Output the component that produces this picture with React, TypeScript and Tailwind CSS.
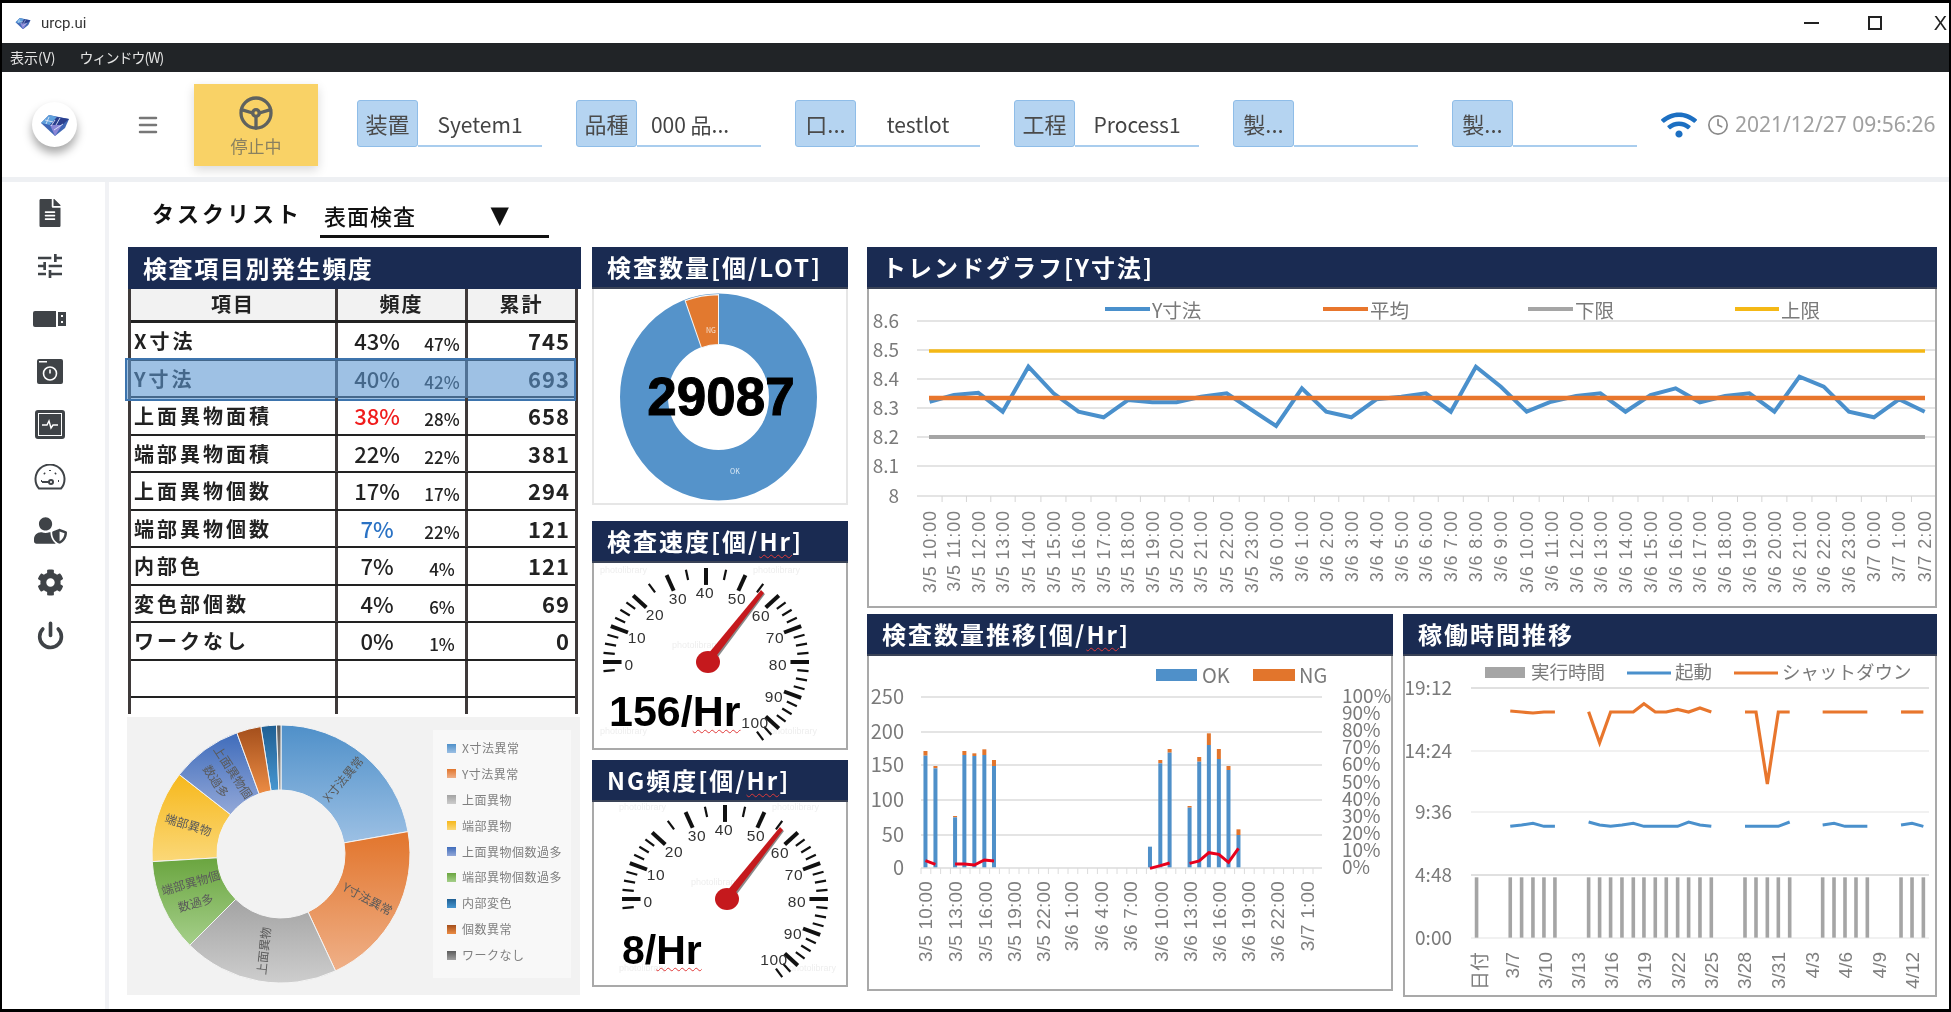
import { FaCog, FaFileAlt, FaUserShield, FaWifi } from 'react-icons/fa'
import { MdTune } from 'react-icons/md'
import { TbSteeringWheel } from 'react-icons/tb'
import { Clock, Menu, Power } from 'lucide-react'
import type { ReactNode } from 'react'

const fields = [
  { label: '装置', value: 'Syetem1' },
  { label: '品種', value: '000 品...', shift: true },
  { label: '口...', value: 'testlot' },
  { label: '工程', value: 'Process1' },
  { label: '製...', value: '' },
  { label: '製...', value: '' },
]

const rows = [
  { name: 'X寸法', a: '43%', b: '47%', total: '745' },
  { name: 'Y寸法', a: '40%', b: '42%', total: '693', selected: true },
  { name: '上面異物面積', a: '38%', b: '28%', total: '658', tone: 'text-[#f01c1c]' },
  { name: '端部異物面積', a: '22%', b: '22%', total: '381' },
  { name: '上面異物個数', a: '17%', b: '17%', total: '294' },
  { name: '端部異物個数', a: '7%', b: '22%', total: '121', tone: 'text-[#2a72c4]' },
  { name: '内部色', a: '7%', b: '4%', total: '121' },
  { name: '変色部個数', a: '4%', b: '6%', total: '69' },
  { name: 'ワークなし', a: '0%', b: '1%', total: '0' },
  { name: '', a: '', b: '', total: '' },
]

const slices = [
  { name: 'X寸法異常', from: 0, to: 80, top: '#4f90c9', bottom: '#9cc0e4' },
  { name: 'Y寸法異常', from: 80, to: 155, top: '#e2752c', bottom: '#efb088' },
  { name: '上面異物', from: 155, to: 225, top: '#a3a3a3', bottom: '#cdcdcd' },
  { name: '端部異物', from: 266.6, to: 308, top: '#f6b81c', bottom: '#fbd878' },
  { name: '上面異物個数過多', from: 308, to: 340, top: '#3f6cbb', bottom: '#93a8d8' },
  { name: '端部異物個数過多', from: 225, to: 266.6, top: '#6aa53f', bottom: '#a5cf8a' },
  { name: '内部変色', from: 351, to: 358, top: '#1f5f93', bottom: '#4796d0' },
  { name: '個数異常', from: 340, to: 351, top: '#a44f1c', bottom: '#ec8c44' },
  { name: 'ワークなし', from: 358, to: 360, top: '#5c5c5c', bottom: '#a0a0a0' },
]

const trendY = [485, 465, 458, 515, 380, 460, 515, 532, 480, 487, 487, 470, 460, 510, 558, 445, 515, 532, 478, 470, 460, 515, 380, 440, 515, 485, 468, 460, 515, 465, 445, 487, 468, 460, 515, 410, 440, 515, 532, 478, 515]
const trendX = [100, 135, 170, 205, 242, 278, 314, 350, 385, 420, 455, 490, 527, 563, 598, 635, 670, 706, 742, 778, 813, 849, 885, 921, 958, 993, 1029, 1064, 1100, 1136, 1172, 1207, 1243, 1278, 1314, 1350, 1385, 1421, 1457, 1493, 1530]

const trendLabels: string[] = []
for (let h = 10; h < 24; h++) trendLabels.push(`3/5 ${h}:00`)
for (let h = 0; h < 24; h++) trendLabels.push(`3/6 ${h}:00`)
for (let h = 0; h < 3; h++) trendLabels.push(`3/7 ${h}:00`)

const qtyBars = [
  [193, 437, 423], [222, 475, 468], [279, 622, 618], [306, 435, 423], [335, 438, 430], [364, 435, 418], [392, 468, 450],
  [845, 710, 710], [875, 460, 450], [902, 428, 417], [960, 593, 588], [988, 455, 441], [1016, 405, 370], [1045, 447, 417], [1073, 480, 468], [1102, 675, 658],
]
const qtyRed = [
  [[193, 752], [222, 763]],
  [[279, 762], [306, 762], [335, 765], [364, 750], [392, 753]],
  [[845, 775], [875, 767], [902, 759]],
  [[960, 760], [988, 753], [1016, 728], [1045, 733], [1073, 757], [1102, 715]],
]
const qtyLabels = [
  [195, '3/5 10:00'], [282, '3/5 13:00'], [368, '3/5 16:00'], [452, '3/5 19:00'], [537, '3/5 22:00'], [620, '3/6 1:00'], [705, '3/6 4:00'],
  [790, '3/6 7:00'], [880, '3/6 10:00'], [963, '3/6 13:00'], [1048, '3/6 16:00'], [1132, '3/6 19:00'], [1217, '3/6 22:00'], [1303, '3/7 1:00'],
] as const

const timeBars = [230, 325, 357, 389, 420, 451, 546, 577, 608, 640, 672, 702, 734, 765, 797, 828, 860, 892, 987, 1018, 1050, 1081, 1113, 1206, 1238, 1269, 1300, 1332, 1427, 1458, 1490]
const timeOrange = [
  [[325, 303], [357, 306], [389, 309], [420, 306], [451, 306]],
  [[546, 305], [577, 398], [608, 306], [640, 306], [672, 306], [702, 281], [734, 306], [765, 306], [797, 298], [828, 306], [860, 294], [892, 306]],
  [[987, 306], [1018, 306], [1050, 522], [1081, 306], [1113, 306]],
  [[1206, 306], [1332, 306]],
  [[1427, 306], [1490, 306]],
]
const timeBlue = [
  [[325, 649], [357, 645], [389, 640], [420, 649], [451, 649]],
  [[546, 636], [577, 645], [608, 649], [640, 645], [672, 640], [702, 649], [734, 649], [765, 649], [797, 649], [828, 636], [860, 645], [892, 649]],
  [[987, 649], [1018, 649], [1050, 649], [1081, 649], [1113, 636]],
  [[1206, 645], [1238, 640], [1269, 649], [1300, 649], [1332, 649]],
  [[1427, 645], [1458, 640], [1490, 649]],
]
const timeLabels = [[242, '日付'], [332, '3/7'], [425, '3/10'], [518, '3/13'], [612, '3/16'], [706, '3/19'], [800, '3/22'], [895, '3/25'], [988, '3/28'], [1082, '3/31'], [1178, '4/3'], [1272, '4/6'], [1368, '4/9'], [1462, '4/12']] as const

const gaugeLabels = [
  [0, 629, 666], [10, 637, 639], [20, 655, 616], [30, 678, 600], [40, 705, 594], [50, 737, 600],
  [60, 761, 617], [70, 775, 639], [80, 778, 666], [90, 774, 698], [100, 755, 724],
]

function ringSlice(cx: number, cy: number, R: number, r: number, from: number, to: number) {
  const pt = (rad: number, deg: number) => {
    const a = ((deg - 90) * Math.PI) / 180
    return `${(cx + rad * Math.cos(a)).toFixed(2)} ${(cy + rad * Math.sin(a)).toFixed(2)}`
  }
  const large = to - from > 180 ? 1 : 0
  return `M${pt(R, from)}A${R} ${R} 0 ${large} 1 ${pt(R, to)}L${pt(r, to)}A${r} ${r} 0 ${large} 0 ${pt(r, from)}Z`
}

function Wavy({ children }: { children: ReactNode }) {
  return <span className="underline decoration-wavy decoration-[#e03a3a] decoration-1 underline-offset-[3px]">{children}</span>
}

function Panel({ title, className, light, children }: { title: ReactNode; className: string; light?: boolean; children: ReactNode }) {
  return (
    <section className={`flex flex-col ${className}`}>
      <h2 className="h-[42px] flex-none bg-[#1a2b52] border-b-2 border-[#3a4357] pl-[15px] text-[24px] leading-[40px] font-bold tracking-[2px] text-white whitespace-nowrap">
        {title}
      </h2>
      <div className={`relative flex-1 bg-white border-x-2 border-b-2 overflow-hidden ${light ? 'border-[#e6e6e6]' : 'border-[#a9a9a9]'}`}>{children}</div>
    </section>
  )
}

function Logo({ size }: { size: number }) {
  return (
    <svg width={size} height={size * 0.8} viewBox="0 0 30 24">
      <path d="M1 10 L9 2 L29 6 L25 15 L15 23 Z" fill="#3f66b5" />
      <path d="M1 10 L9 2 L17 4 L10 12 Z" fill="#5fa0dc" />
      <path d="M17 4 L29 6 L22 12 L10 12 Z" fill="#2b3f8e" />
      <path d="M10 12 L22 12 L15 23 Z" fill="#8a86d6" />
      <path d="M5 7 L13 9 M9 4 L6 11 M15 7 L11 13 M20 5 L16 12 M14 17 L23 11" stroke="#dbe7f7" strokeWidth="0.9" />
    </svg>
  )
}

function UsbIcon() {
  return (
    <svg width="34" height="18" viewBox="0 0 34 18">
      <path d="M0 3a2 2 0 0 1 2-2h21v16H2a2 2 0 0 1-2-2z" fill="#3f4347" />
      <path d="M25 2h8v14h-8z" fill="#3f4347" />
      <path d="M28 5h2v2h-2zM28 11h2v2h-2z" fill="#fff" />
    </svg>
  )
}

function CameraIcon() {
  return (
    <svg width="26" height="25" viewBox="0 0 26 25">
      <rect width="26" height="25" rx="2" fill="#3f4347" />
      <rect x="2" y="2" width="8" height="1.5" fill="#fff" />
      <circle cx="13" cy="14.5" r="6.5" fill="none" stroke="#fff" strokeWidth="1.6" />
      <path d="M13 10.5v4" stroke="#fff" strokeWidth="1.6" />
    </svg>
  )
}

function MonitorIcon() {
  return (
    <svg width="30" height="29" viewBox="0 0 30 29">
      <rect x="1.5" y="1.5" width="27" height="26" rx="1.5" fill="#fff" stroke="#3f4347" strokeWidth="3" />
      <rect x="4" y="4" width="22" height="21" fill="#3f4347" />
      <path d="M7 15h5l2-4 2 7 2-3h5" fill="none" stroke="#fff" strokeWidth="1.4" />
    </svg>
  )
}

function SpeedIcon() {
  return (
    <svg width="32" height="26" viewBox="0 0 32 26" fill="none" stroke="#3f4347" strokeWidth="2">
      <path d="M5 24.5A14.5 14.5 0 1 1 27 24.5Z" />
      <path d="M7 17h1M10 9l1 1M16 6v1M22 9l-1 1M25 17h-1" />
      <circle cx="17" cy="18" r="2" />
      <path d="M15 18h-7" />
    </svg>
  )
}

function Gauge({ dx, dy, top, height }: { dx: number; dy: number; top: number; height: number }) {
  const ticks: { v: number; major: boolean }[] = []
  for (let v = -2.5; v <= 105; v += 2.5) {
    const major = v % 10 === 0
    if (!major && v > 20 && v < 60 && v % 5 !== 0) continue
    ticks.push({ v, major })
  }
  const marks = [
    [600, 574], [753, 574], [672, 649], [600, 735], [770, 735],
  ]
  return (
    <svg className="block w-full h-full" viewBox={`594 ${top} 252 ${height}`}>
      <g transform={`translate(${dx} ${dy})`}>
        {marks.map(([x, y]) => (
          <text key={`${x}-${y}`} x={x} y={y} fontSize="9" fill="#eeeeee" className="font-['Liberation_Sans',sans-serif]">photolibrary</text>
        ))}
        {ticks.map(({ v, major }) => {
          const a = ((180 + v * 2.25) * Math.PI) / 180
          const inner = major ? 0.82 : 0.89
          const x1 = 706 + 103 * Math.cos(a)
          const y1 = 663 + 94 * Math.sin(a)
          const x2 = 706 + 103 * inner * Math.cos(a)
          const y2 = 663 + 94 * inner * Math.sin(a)
          return <line key={v} x1={x1} y1={y1} x2={x2} y2={y2} stroke="#111" strokeWidth={major ? 4 : 2.2} />
        })}
        {gaugeLabels.map(([v, x, y]) => (
          <text key={v} x={x} y={y + 5} textAnchor="middle" fontSize="15.5" letterSpacing="0.6" fill="#333" className="font-['Liberation_Sans',sans-serif]">{v}</text>
        ))}
        <polygon points="712,654 718,658 765,595 762,593" fill="#8a8a8a" />
        <polygon points="708,655 714,660 764,594 761,591" fill="#c5191d" />
        <ellipse cx="708" cy="663" rx="12" ry="11" fill="#c5191d" />
      </g>
    </svg>
  )
}

function TrendChart() {
  const pts = trendX.map((x, i) => `${(860 + x / 1.437).toFixed(1)},${(240 + trendY[i] / 3).toFixed(1)}`).join(' ')
  const grid = [321, 350, 379, 408, 437, 466, 496]
  const yLabels = ['8.6', '8.5', '8.4', '8.3', '8.2', '8.1', '8']
  const legend = [
    { x: 1105, w: 45, color: '#4a90cc', text: 'Y寸法' },
    { x: 1323, w: 45, color: '#e8762d', text: '平均' },
    { x: 1528, w: 45, color: '#a5a5a5', text: '下限' },
    { x: 1735, w: 44, color: '#f4b816', text: '上限' },
  ]
  return (
    <svg className="block w-full h-full" viewBox="869 289 1066 317">
      {grid.map((y) => <line key={y} x1="917" x2="1936" y1={y} y2={y} stroke="#e4e4e4" strokeWidth="2" />)}
      {yLabels.map((t, i) => (
        <text key={t} x="899" y={grid[i] + 7} textAnchor="end" fontSize="19" fill="#7a7a7a">{t}</text>
      ))}
      {legend.map((l) => (
        <g key={l.text}>
          <line x1={l.x} x2={l.x + l.w} y1="309" y2="309" stroke={l.color} strokeWidth="4" />
          <text x={l.x + l.w + 2} y="318" fontSize="19.5" fill="#7a7a7a">{l.text}</text>
        </g>
      ))}
      <line x1="929" x2="1925" y1="351" y2="351" stroke="#f4b816" strokeWidth="3.5" />
      <line x1="929" x2="1925" y1="437" y2="437" stroke="#a5a5a5" strokeWidth="4" />
      <polyline points={pts} fill="none" stroke="#4a90cc" strokeWidth="4" />
      <line x1="929" x2="1925" y1="398" y2="398" stroke="#e8762d" strokeWidth="4.5" />
      {trendLabels.map((t, i) => {
        const x = 860 + trendX[i] / 1.437
        return (
          <g key={t}>
            <line x1={x + 12.5} x2={x + 12.5} y1="496" y2="502" stroke="#d5d5d5" />
            <text transform={`translate(${x + 6.5} 510) rotate(-90)`} textAnchor="end" fontSize="18" letterSpacing="0.9" fill="#7f7f7f" className="font-['Liberation_Sans',sans-serif]">{t}</text>
          </g>
        )
      })}
    </svg>
  )
}

function QtyChart() {
  const X = (z: number) => 860 + z / 2.904
  const Y = (z: number) => 610 + z / 3
  const grid = [697, 732, 765, 800, 835, 868]
  const labels = ['250', '200', '150', '100', '50', '0']
  return (
    <svg className="block w-full h-full" viewBox="870 656 522 333">
      {grid.map((y) => <line key={y} x1="922" x2="1323" y1={y} y2={y} stroke="#e4e4e4" strokeWidth="2" />)}
      {labels.map((t, i) => (
        <text key={t} x="905" y={grid[i] + 7} textAnchor="end" fontSize="20" fill="#7a7a7a">{t}</text>
      ))}
      {[100, 90, 80, 70, 60, 50, 40, 30, 20, 10, 0].map((p, i) => (
        <text key={p} x="1343" y={696 + i * 17.1 + 7} fontSize="19" fill="#7a7a7a">{p}%</text>
      ))}
      <rect x="1157" y="669" width="41" height="12" fill="#4f90c9" />
      <text x="1203" y="683" fontSize="20" fill="#7a7a7a">OK</text>
      <rect x="1254" y="669" width="42" height="12" fill="#e2752c" />
      <text x="1300" y="683" fontSize="20" fill="#7a7a7a">NG</text>
      {Array.from({ length: 41 }, (_, i) => (
        <line key={i} x1={922 + i * 9.8} x2={922 + i * 9.8} y1="868" y2="874" stroke="#dcdcdc" />
      ))}
      {qtyBars.map(([x, blue, orange]) => (
        <g key={x}>
          <rect x={X(x) - 2} y={Y(orange)} width="4" height={Y(blue) - Y(orange)} fill="#e2752c" />
          <rect x={X(x) - 2} y={Y(blue)} width="4" height={Y(772) - Y(blue)} fill="#4f90c9" />
        </g>
      ))}
      {qtyRed.map((seg) => (
        <polyline key={seg[0][0]} points={seg.map(([x, y]) => `${X(x)},${Y(y)}`).join(' ')} fill="none" stroke="#e8001c" strokeWidth="3" />
      ))}
      {qtyLabels.map(([x, t]) => (
        <text key={t} transform={`translate(${X(x) + 6} 881) rotate(-90)`} textAnchor="end" fontSize="19" letterSpacing="0.2" fill="#7f7f7f" className="font-['Liberation_Sans',sans-serif]">{t}</text>
      ))}
    </svg>
  )
}

function TimeChart() {
  const X = (z: number) => 1395 + z / 2.82
  const Y = (z: number) => 610 + z / 3
  const grid = [688, 751, 812, 875, 938]
  const labels = ['19:12', '14:24', '9:36', '4:48', '0:00']
  return (
    <svg className="block w-full h-full" viewBox="1405 656 530 339">
      {grid.map((y, i) => <line key={y} x1="1471" x2="1929" y1={y} y2={y} stroke={i === 0 || i === 3 ? '#e0e0e0' : '#e4e4e4'} strokeWidth={i === 0 || i === 3 ? 2 : 1.2} />)}
      {labels.map((t, i) => (
        <text key={t} x="1452" y={grid[i] + 7} textAnchor="end" fontSize="19" fill="#7a7a7a">{t}</text>
      ))}
      <rect x="1485" y="667" width="40" height="11" fill="#a5a5a5" />
      <text x="1531" y="679" fontSize="18.5" fill="#7a7a7a">実行時間</text>
      <line x1="1627" x2="1671" y1="673" y2="673" stroke="#4a90cc" strokeWidth="3" />
      <text x="1675" y="679" fontSize="18.5" fill="#7a7a7a">起動</text>
      <line x1="1734" x2="1778" y1="673" y2="673" stroke="#e8762d" strokeWidth="3" />
      <text x="1782" y="679" fontSize="18.5" fill="#7a7a7a">シャットダウン</text>
      {timeBars.map((x) => <rect key={x} x={X(x) - 1.8} y={Y(802)} width="3.6" height={Y(983) - Y(802)} fill="#a5a5a5" />)}
      {timeOrange.map((seg) => (
        <polyline key={seg[0][0]} points={seg.map(([x, y]) => `${X(x)},${Y(y)}`).join(' ')} fill="none" stroke="#e8762d" strokeWidth="3.2" />
      ))}
      {timeBlue.map((seg) => (
        <polyline key={seg[0][0]} points={seg.map(([x, y]) => `${X(x)},${Y(y)}`).join(' ')} fill="none" stroke="#4a90cc" strokeWidth="3" />
      ))}
      {timeLabels.map(([x, t]) => (
        <text key={t} transform={`translate(${X(x) + 6} 952) rotate(-90)`} textAnchor="end" fontSize="19" fill="#7f7f7f" className="font-['Liberation_Sans','Noto_Sans_CJK_JP',sans-serif]">{t}</text>
      ))}
    </svg>
  )
}

function CauseDonut() {
  const labels: [string, number, number, number][] = [
    ['X寸法異常', 344, 780, -50],
    ['Y寸法異常', 367, 900, 28],
    ['上面異物', 265, 951, -84],
    ['端部異物', 188, 826, 17],
    ['端部異物個', 191, 884, -16],
    ['数過多', 196, 904, -16],
    ['上面異物個', 232, 773, 57],
    ['数過多', 215, 782, 57],
  ]
  return (
    <svg className="flex-none" width="306" height="276" viewBox="127 717 306 276">
      <defs>
        {slices.map((s, i) => (
          <linearGradient key={s.name} id={`slice${i}`} x1="0" y1="0" x2="0" y2="1">
            <stop offset="0" stopColor={s.top} />
            <stop offset="1" stopColor={s.bottom} />
          </linearGradient>
        ))}
      </defs>
      {slices.map((s, i) => (
        <path key={s.name} d={ringSlice(281, 854, 129, 64, s.from, s.to)} fill={`url(#slice${i})`} stroke="#f4f4f4" strokeWidth="1" />
      ))}
      {labels.map(([t, x, y, r]) => (
        <text key={`${t}-${x}`} transform={`translate(${x} ${y}) rotate(${r})`} textAnchor="middle" dominantBaseline="middle" fontSize="12" fill="#5a5a5a">{t}</text>
      ))}
    </svg>
  )
}

export default function App() {
  return (
    <div className="w-[1951px] h-[1012px] flex flex-col overflow-hidden bg-white border-x-2 border-y-[3px] border-black text-[#222] blur-[0.5px] font-['Noto_Sans_CJK_JP','Noto_Sans',sans-serif]">
      {/* title bar */}
      <header className="h-[40px] flex-none flex items-center pl-[13px]">
        <Logo size={16} />
        <span className="ml-[10px] text-[15px] text-[#333] font-['Roboto',sans-serif]">urcp.ui</span>
        <div className="ml-auto flex items-center text-[#222]">
          <span className="w-[15px] h-[2px] bg-[#222]" />
          <span className="ml-[49px] w-[14px] h-[14px] border-2 border-[#222]" />
          <span className="ml-[52px] mr-[2px] text-[20px] leading-none font-['Liberation_Sans',sans-serif]">X</span>
        </div>
      </header>
      <nav className="h-[29px] flex-none flex items-center gap-[24px] pl-[8px] bg-[#212427] text-[14px] text-[#e4e4e4]">
        <span>表示(V)</span>
        <span className="tracking-[-1px]">ウィンドウ(W)</span>
      </nav>

      {/* toolbar */}
      <div className="h-[105px] flex-none flex items-center bg-white">
        <div className="ml-[30px] w-[45px] h-[45px] flex-none flex items-center justify-center rounded-full bg-white shadow-[0_6px_10px_rgba(0,0,0,0.35)]">
          <Logo size={30} />
        </div>
        <Menu className="ml-[59px] text-[#777]" size={24} strokeWidth={2.5} />
        <button className="ml-[34px] w-[124px] h-[82px] flex-none flex flex-col items-center justify-center bg-[#f9d266] shadow-[0_4px_10px_rgba(0,0,0,0.15)] text-[#8a8160] text-[17px]">
          <TbSteeringWheel className="text-[#5f625f]" size={40} />
          <span className="mt-[3px] leading-[20px]">停止中</span>
        </button>
        <div className="ml-[39px] -mt-[2px] flex gap-[34px]">
          {fields.map((f, i) => (
            <div key={i} className="w-[185px] h-[47px] flex">
              <span className="w-[61px] flex-none flex items-center justify-center bg-[#b5d4f1] border border-[#8fbde8] rounded-[3px] text-[22px] text-[#4a4a4a] whitespace-nowrap">
                {f.label}
              </span>
              <span className={`flex-1 flex items-center justify-center pt-[5px] border-b-2 border-[#a9cdee] text-[21px] text-[#444] ${f.shift ? 'pr-[18px]' : ''}`}>
                {f.value}
              </span>
            </div>
          ))}
        </div>
        <FaWifi className="ml-[24px] flex-none text-[#1c6fc2]" size={36} />
        <Clock className="ml-[10px] flex-none text-[#8a8a8a]" size={22} strokeWidth={1.8} />
        <span className="ml-[6px] text-[21px] text-[#a0a0a0] whitespace-nowrap font-['Noto_Sans',sans-serif]">2021/12/27 09:56:26</span>
      </div>
      <div className="h-[5px] flex-none bg-[#eef0f3]" />

      <div className="flex-1 flex min-h-0">
        {/* side nav */}
        <aside className="w-[96px] flex-none flex flex-col items-center pt-[5px] mr-[7px] text-[#3f4347] box-content">
          {[
            <FaFileAlt size={28} />,
            <MdTune size={32} />,
            <UsbIcon />,
            <CameraIcon />,
            <MonitorIcon />,
            <SpeedIcon />,
            <FaUserShield size={33} />,
            <FaCog size={27} />,
            <Power size={29} strokeWidth={3} />,
          ].map((icon, i) => (
            <div key={i} className="h-[52.8px] flex items-center justify-center">{icon}</div>
          ))}
        </aside>

        <main className="flex-1 min-w-0 pl-[19px] border-l-4 border-[#f1f2f5]">
          <div className="h-[65px] flex items-start">
            <span className="mt-[14px] ml-[24px] w-[168px] text-[22px] font-bold tracking-[3px] text-[#111]">タスクリスト</span>
            <div className="w-[229px] h-[43px] mt-[13px] flex items-center justify-between border-b-[3px] border-[#111] pl-[4px] pr-[40px] font-medium text-[#111]">
              <span className="text-[22px] tracking-[1px]">表面検査</span>
              <span className="text-[24px] leading-none font-['DejaVu_Sans',sans-serif]">▼</span>
            </div>
          </div>

          <div className="flex">
            {/* column 1 */}
            <div className="w-[453px] flex-none">
              <h2 className="h-[42px] bg-[#1a2b52] pl-[15px] text-[24px] leading-[41px] font-bold tracking-[1.6px] text-white whitespace-nowrap">検査項目別発生頻度</h2>
              <div className="w-[450px] border-x-[3px] border-[#3f3a3a]">
                <div className="grid grid-cols-[207px_130px_107px] h-[34px] bg-[#f2f2f2] border-b-[3px] border-[#222] text-[20px] font-bold leading-[30px] text-center tracking-[2px]">
                  <span className="border-r-[3px] border-[#3f3a3a]">項目</span>
                  <span className="border-r-[3px] border-[#3f3a3a]">頻度</span>
                  <span>累計</span>
                </div>
                {rows.map((r, i) => (
                  <div key={i} className="relative grid grid-cols-[207px_130px_107px] h-[37.5px] border-b-2 border-[#222] items-stretch">
                    <span className="border-r-[3px] border-[#3f3a3a] pl-[3px] text-[20px] leading-[36px] font-bold tracking-[3px] whitespace-nowrap">{r.name}</span>
                    <span className="flex items-start pl-[13px] border-r-[3px] border-[#3f3a3a]">
                      <span className={`w-[52px] text-center text-[22px] leading-[35px] font-medium ${r.tone ?? ''}`}>{r.a}</span>
                      <span className="w-[46px] ml-[16px] mt-[8px] text-center text-[17px] leading-[26px] font-medium">{r.b}</span>
                    </span>
                    <span className="pr-[5px] text-right text-[22px] leading-[34px] font-bold tracking-[1px]">{r.total}</span>
                    {r.selected && (
                      <div className="absolute -left-[6px] -right-[1px] -top-[3px] h-[43px] bg-[#5e97d2]/60 border-2 border-[#3d74ad]" />
                    )}
                  </div>
                ))}
                <div className="grid grid-cols-[207px_130px_107px] h-[16px]">
                  <span className="border-r-[3px] border-[#3f3a3a]" />
                  <span className="border-r-[3px] border-[#3f3a3a]" />
                  <span />
                </div>
              </div>
              <div className="-ml-px mt-[3px] w-[453px] h-[278px] flex bg-[#f2f2f2]">
                <CauseDonut />
                <ul className="w-[138px] h-[248px] mt-[13px] flex flex-col justify-between pt-[8px] pb-[13px] pl-[14px] bg-[#f8f8f8] text-[12px] leading-[20px] tracking-[0.5px] text-[#7f7f7f]">
                  {slices.map((s) => (
                    <li key={s.name} className="flex items-center gap-[6px] whitespace-nowrap">
                      <span
                        className="w-[9px] h-[9px] flex-none"
                        style={{ background: `linear-gradient(${s.top}, ${s.bottom})` }}
                      />
                      {s.name}
                    </li>
                  ))}
                </ul>
              </div>
            </div>

            {/* column 2 */}
            <div className="ml-[11px] w-[256px] flex-none flex flex-col">
              <Panel light title="検査数量[個/LOT]" className="h-[258px]">
                <svg className="block w-full h-full" viewBox="594 289 252 214">
                  <g transform="translate(718.5 397) scale(1 1.05)">
                    <circle r="74.5" fill="none" stroke="#5593ca" strokeWidth="48" />
                    <path d={ringSlice(0, 0, 97.5, 50, 340, 360)} fill="#e2792f" stroke="#f5f5f5" strokeWidth="1" />
                  </g>
                  <text x="706" y="333" fontSize="7" fill="#f5e3d5">NG</text>
                  <text x="730" y="474" fontSize="7" fill="#dbe9f5">OK</text>
                  <text x="721" y="415" textAnchor="middle" fontSize="53" fontWeight="700" stroke="#000" strokeWidth="1" className="font-['Liberation_Sans',sans-serif]">29087</text>
                </svg>
              </Panel>
              <Panel title={<>検査速度[個/<Wavy>Hr</Wavy>]</>} className="mt-[16px] h-[229px]">
                <Gauge dx={0} dy={0} top={564} height={185} />
                <span className="absolute left-[15px] top-[126px] text-[43px] leading-[44px] font-bold text-black font-['Liberation_Sans',sans-serif]">156/<Wavy>Hr</Wavy></span>
              </Panel>
              <Panel title={<>NG頻度[個/<Wavy>Hr</Wavy>]</>} className="mt-[10px] h-[227px]">
                <Gauge dx={19} dy={232} top={798} height={183} />
                <span className="absolute left-[28px] top-[126px] text-[41px] leading-[44px] font-bold text-black font-['Liberation_Sans',sans-serif]">8/<Wavy>Hr</Wavy></span>
              </Panel>
            </div>

            {/* column 3 */}
            <div className="ml-[19px] w-[1070px] flex-none flex flex-col">
              <Panel title="トレンドグラフ[Y寸法]" className="h-[361px]">
                <TrendChart />
              </Panel>
              <div className="mt-[6px] flex gap-[10px] items-start">
                <Panel title={<>検査数量推移[個/<Wavy>Hr</Wavy>]</>} className="w-[526px] h-[377px]">
                  <QtyChart />
                </Panel>
                <Panel title="稼働時間推移" className="w-[534px] h-[383px]">
                  <TimeChart />
                </Panel>
              </div>
            </div>
          </div>
        </main>
      </div>
    </div>
  )
}
